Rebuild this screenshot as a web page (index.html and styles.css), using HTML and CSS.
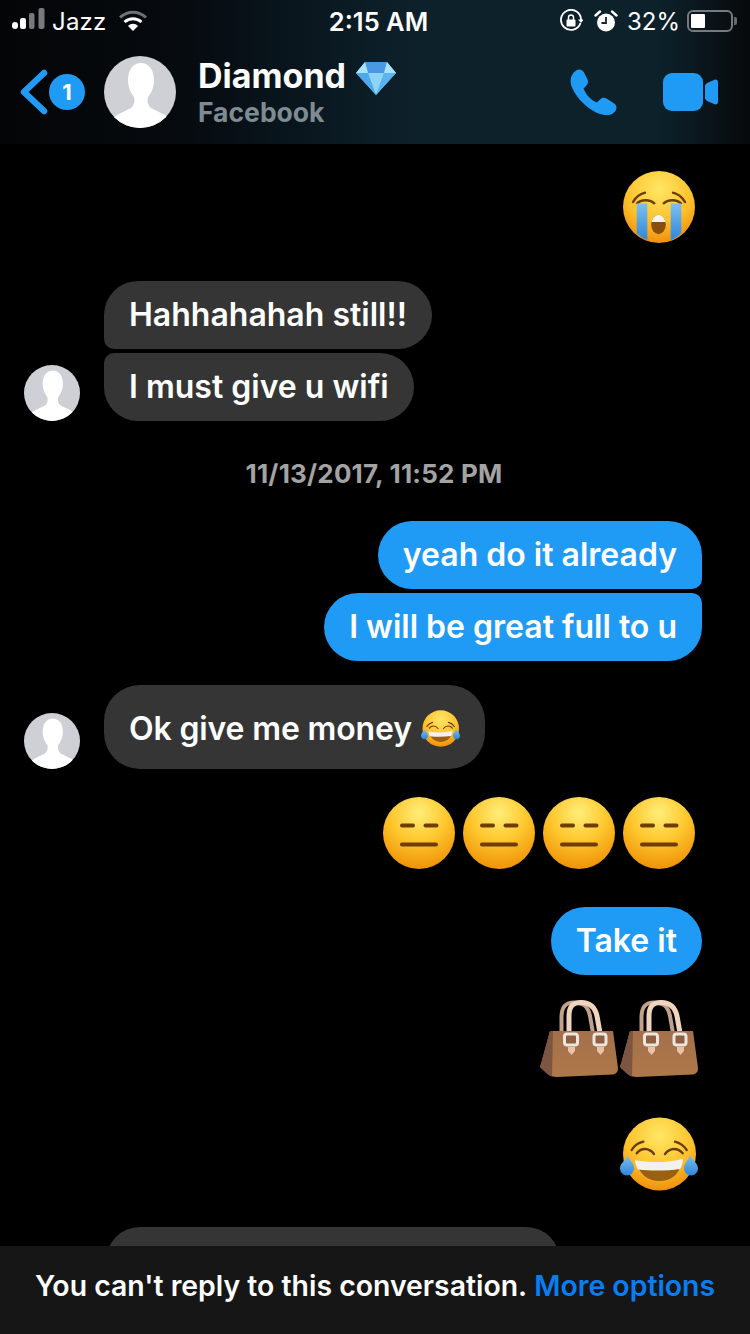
FILE: index.html
```html
<!DOCTYPE html>
<html lang="en">
<head>
<meta charset="utf-8">
<title>Diamond</title>
<link rel="stylesheet" href="styles.css">
</head>
<body>
<svg class="defs" aria-hidden="true">
  <defs>
    <radialGradient id="faceA" cx="50%" cy="25%" r="75%">
      <stop offset="0" stop-color="#ffe765"/><stop offset=".6" stop-color="#fdc22c"/><stop offset="1" stop-color="#ef900e"/>
    </radialGradient>
    <radialGradient id="faceB" cx="50%" cy="22%" r="78%">
      <stop offset="0" stop-color="#ffee7a"/><stop offset=".5" stop-color="#fec72d"/><stop offset="1" stop-color="#f09208"/>
    </radialGradient>
    <linearGradient id="tear" x1="0" y1="0" x2="0" y2="1">
      <stop offset="0" stop-color="#7cc0ee"/><stop offset="1" stop-color="#2f86dc"/>
    </linearGradient>
    <linearGradient id="leather" x1="0" y1="0" x2="0" y2="1">
      <stop offset="0" stop-color="#a4704a"/><stop offset="1" stop-color="#ae7849"/>
    </linearGradient>
    <clipPath id="avatarClip"><circle cx="36" cy="36" r="36"/></clipPath>
    <clipPath id="cryMouth"><ellipse cx="35.500" cy="53.500" rx="7.300" ry="9.700"/></clipPath>

    <symbol id="person" viewBox="0 0 72 72">
      <circle cx="36" cy="36" r="36" fill="#cfd0d5"/>
      <path clip-path="url(#avatarClip)" fill="#fff" d="M37 7C45 7 50 14 50 24C50 32 47 37 44 41C43 45 43.500 49 47 52L59 58C64 60 67 64 67 72L7 72C7 64 10 60 15 58L27 52C30.500 49 31 45 30 41C27 37 24 32 24 24C24 14 29 7 37 7Z"/>
    </symbol>

    <symbol id="e-cry" viewBox="0 0 72 72">
      <circle cx="36" cy="36" r="36" fill="url(#faceA)"/>
      <path d="M10 31C13 26 17 23 22 21.700" fill="none" stroke="#6b3c06" stroke-width="2.400" stroke-linecap="round"/>
      <path d="M62 31C59 26 55 23 50 21.700" fill="none" stroke="#6b3c06" stroke-width="2.400" stroke-linecap="round"/>
      <path d="M13.500 33C18 28 27 28 32 33" fill="none" stroke="#6b3c06" stroke-width="2.400"/>
      <path d="M40 33C45 28 54 28 58.500 33" fill="none" stroke="#6b3c06" stroke-width="2.400"/>
      <path d="M13.700 32.500H24.300V69C20 67.500 16.500 65 13.700 62Z" fill="url(#tear)"/>
      <path d="M47.700 32.500H58.300V62C55.500 65 52 67.500 47.700 69Z" fill="url(#tear)"/>
      <ellipse cx="35.500" cy="53.500" rx="7.300" ry="9.700" fill="#8a4e0a"/>
      <rect x="27" y="43" width="18" height="8" fill="#f5f3ee" clip-path="url(#cryMouth)"/>
    </symbol>

    <symbol id="e-flat" viewBox="0 0 72 72">
      <circle cx="36" cy="36" r="36" fill="url(#faceB)"/>
      <rect x="17" y="26.500" width="15" height="4" rx="2" fill="#6e3f05"/>
      <rect x="40.500" y="26.500" width="15" height="4" rx="2" fill="#6e3f05"/>
      <rect x="17" y="45.500" width="38" height="4" rx="2" fill="#6e3f05"/>
    </symbol>

    <symbol id="e-joy" viewBox="0 0 78 74">
      <circle cx="39.500" cy="37" r="36.500" fill="url(#faceA)"/>
      <path d="M11.700 33C14 29 18 26 23.300 24.700" fill="none" stroke="#6b3c06" stroke-width="2.400" stroke-linecap="round"/>
      <path d="M66.700 33C64 29 60 26 55 24.700" fill="none" stroke="#6b3c06" stroke-width="2.400" stroke-linecap="round"/>
      <path d="M16.700 36.300C21 30.500 29 30.500 34 37" fill="none" stroke="#6b3c06" stroke-width="2.400" stroke-linecap="round"/>
      <path d="M45 37C50 30.500 58 30.500 62.700 36.300" fill="none" stroke="#6b3c06" stroke-width="2.400" stroke-linecap="round"/>
      <path d="M17 46C31 49 47 49 61 46C60 57 51 64 39.500 64C28 64 19 57 17 46Z" fill="#9a5f10"/>
      <path d="M15 43C30 46 48 46 63 41.700C63 45 62 49 60 52C47 54 31 54 18 52.500C16 49 15 46 15 43Z" fill="#f3f1ee"/>
      <path d="M8 38.500C9 43 14 46 14 51C14 55 11 58.500 7 58.500C3 58.500 0 55 0 51.500C0 46 6 43 8 38.500Z" fill="url(#tear)"/>
      <path d="M70 38C69 43 64 46 64 51C64 55 67 58.500 71 58.500C75 58.500 78 55 78 51.500C78 46 72 43 70 38Z" fill="url(#tear)"/>
    </symbol>

    <symbol id="e-bag" viewBox="0 0 78 78">
      <path d="M21.500 33V16C22 6 26 2.500 34 2.500C43 2.500 48 6 50 16L53 33" fill="none" stroke="#c3a08a" stroke-width="4"/>
      <path d="M29 33V16C29 6 33 2.500 41 2.500C50 2.500 55 7 57 16L60 33" fill="none" stroke="#efd5c0" stroke-width="5"/>
      <path d="M10 31H73L78 68C78 72 76 74 73 74.500L17 77C13 77 10 76 7 73.500L1 68C0 67 0 66 1 64Z" fill="url(#leather)"/>
      <path d="M10 31H13L12 76.500C10 76 9 75 7 73.500L1 68C0 67 0 66 1 64Z" fill="#7c5640"/>
      <rect x="24.500" y="34" width="13" height="11" rx="2.500" fill="#8f6040" stroke="#ece6e0" stroke-width="3"/>
      <rect x="54" y="34" width="12" height="11" rx="2.500" fill="#8f6040" stroke="#ece6e0" stroke-width="3"/>
      <path d="M28 47H35V51L31.500 55L28 51Z" fill="#e9c2a8"/>
      <path d="M57 47H64V51L60.500 55L57 51Z" fill="#e9c2a8"/>
    </symbol>
  </defs>
</svg>

<div class="screen">
  <header class="top">
    <div class="status">
      <div class="status-left">
        <svg class="signal" viewBox="0 0 36 24" aria-hidden="true">
          <rect x="0" y="15" width="6" height="7" rx="3" fill="#fff"/>
          <rect x="8" y="11" width="6" height="11" rx="2" fill="#fff"/>
          <rect x="17" y="6" width="5.500" height="16" rx="2" fill="#77797c"/>
          <rect x="26.500" y="1" width="6" height="21" rx="2" fill="#77797c"/>
        </svg>
        <span class="carrier">Jazz</span>
        <svg class="wifi" viewBox="0 0 28 22" aria-hidden="true">
          <path d="M1 7.500C8.500 .5 19.500 .5 27 7.500" fill="none" stroke="#6f7275" stroke-width="3"/>
          <path d="M5.500 12C10.500 7.500 17.500 7.500 22.500 12" fill="none" stroke="#fff" stroke-width="3"/>
          <path d="M9 16C12 13 16 13 19 16L14 21Z" fill="#fff"/>
        </svg>
      </div>
      <div class="clock">2:15 AM</div>
      <div class="status-right">
        <svg class="ind" viewBox="0 0 24 24" aria-hidden="true">
          <path d="M21.500 14A10 10 0 1 1 22 11" fill="none" stroke="#fff" stroke-width="1.800"/>
          <path d="M19 10.500H24.500L22 14Z" fill="#fff"/>
          <rect x="7.500" y="10.500" width="9" height="7" rx="1" fill="#fff"/>
          <path d="M9.500 11V8.500A2.500 2.500 0 0 1 14.500 8.500V11" fill="none" stroke="#fff" stroke-width="1.500"/>
        </svg>
        <svg class="ind alarm" viewBox="0 0 24 24" aria-hidden="true">
          <circle cx="12" cy="13.500" r="9" fill="#fff"/>
          <path d="M12 8V14H7.500" fill="none" stroke="#14242c" stroke-width="1.800"/>
          <path d="M1.500 6.500L6 2.500M22.500 6.500L18 2.500" stroke="#fff" stroke-width="2.400" stroke-linecap="round"/>
        </svg>
        <span class="battery-text">32%</span>
        <div class="battery"><div class="battery-fill"></div></div>
        <div class="battery-nub"></div>
      </div>
    </div>
    <nav class="nav">
      <svg class="chevron" viewBox="0 0 28 46" aria-hidden="true">
        <path d="M24 4L4 23L24 42" fill="none" stroke="#1f9bf5" stroke-width="6.500" stroke-linecap="round" stroke-linejoin="round"/>
      </svg>
      <span class="badge">1</span>
      <svg class="nav-avatar" aria-hidden="true"><use href="#person"/></svg>
      <div class="who">
        <div class="name-line">
          <span class="name">Diamond</span>
          <svg class="gem" viewBox="0 0 40 34" aria-hidden="true">
            <path d="M9 1H31L40 12L20 34L0 12Z" fill="#6cc5f5"/>
            <path d="M9 1H31L28 12H12Z" fill="#4a97e4"/>
            <path d="M12 12H28L20 34Z" fill="#8fd4f7"/>
            <path d="M0 12L9 1L12 12Z" fill="#a9e2fb"/>
            <path d="M40 12L31 1L28 12Z" fill="#a9e2fb"/>
            <path d="M0 12H12L20 34Z" fill="#4ea9ec"/>
            <path d="M40 12H28L20 34Z" fill="#58b3ee"/>
          </svg>
        </div>
        <div class="source">Facebook</div>
      </div>
      <div class="actions">
        <svg class="phone" viewBox="0 0 48 48" aria-hidden="true">
          <path fill="#1f9bf5" d="M7 2.500C10 .5 13.500 1.500 15 4.500L18.500 11.500C19.500 14 19 16 17 18L14.500 20.500C17 27 22 32 28 34.500L31 31.500C33 29.500 35.500 29.500 37.500 30.500L44.500 35C48 37 48.500 41 45.500 44C42 47.500 37 48 31 46C19.500 42 8 31 3 19.500C0 12 2 6 7 2.500Z"/>
        </svg>
        <svg class="video" viewBox="0 0 55 38" aria-hidden="true">
          <rect x="0" y="0" width="40" height="38" rx="9" fill="#1f9bf5"/>
          <path d="M42 13C42 12 43 11 44 10L51 7C53 6 55 7 55 9V29C55 31 53 32 51 31L44 28C43 27 42 26 42 25Z" fill="#1f9bf5"/>
        </svg>
      </div>
    </nav>
  </header>

  <main class="thread">
    <div class="emoji-row first"><svg class="em"><use href="#e-cry"/></svg></div>

    <div class="group received gap-38">
      <svg class="avatar" aria-hidden="true"><use href="#person"/></svg>
      <div class="stack">
        <div class="bubble in top-one">Hahhahahah still!!</div>
        <div class="bubble in bottom-one">I must give u wifi</div>
      </div>
    </div>

    <div class="stamp">11/13/2017, 11:52 PM</div>

    <div class="stack out">
      <div class="bubble mine out-top">yeah do it already</div>
      <div class="bubble mine out-bottom">I will be great full to u</div>
    </div>

    <div class="group received gap-24">
      <svg class="avatar" aria-hidden="true"><use href="#person"/></svg>
      <div class="bubble in tall">Ok give me money <svg class="em-small" aria-hidden="true"><use href="#e-joy"/></svg></div>
    </div>

    <div class="emoji-row neutral">
      <svg class="em"><use href="#e-flat"/></svg>
      <svg class="em"><use href="#e-flat"/></svg>
      <svg class="em"><use href="#e-flat"/></svg>
      <svg class="em"><use href="#e-flat"/></svg>
    </div>

    <div class="stack out gap-38b">
      <div class="bubble mine">Take it</div>
    </div>

    <div class="emoji-row bags">
      <svg class="bag"><use href="#e-bag"/></svg>
      <svg class="bag"><use href="#e-bag"/></svg>
    </div>

    <div class="emoji-row laugh"><svg class="em-joy"><use href="#e-joy"/></svg></div>

    <div class="bubble in partial"></div>
  </main>

  <footer class="notice">You can't reply to this conversation.&nbsp;<span class="link">More options</span></footer>
</div>
</body>
</html>
```
FILE: styles.css
```css
* { box-sizing: border-box; }
html, body { margin: 0; padding: 0; background: #000; }
body { font-family: Inter, "Liberation Sans", sans-serif; color: #fff; }
.defs { position: absolute; width: 0; height: 0; }
.screen { position: relative; width: 750px; height: 1334px; overflow: hidden; background: #000; }

.top { height: 144px; background: linear-gradient(90deg, #040506 0%, #060b10 25%, #09161e 40%, #0d212b 55%, #0d212b 88%, #07090b 100%); }
.status { height: 42px; display: flex; align-items: center; justify-content: space-between; }
.status-left { display: flex; align-items: center; padding-left: 12px; width: 300px; }
.signal { width: 36px; height: 24px; margin-top: -4px; }
.carrier { font-size: 24px; font-weight: 400; margin-left: 4px; letter-spacing: .2px; }
.wifi { width: 28px; height: 22px; margin-left: 13px; }
.clock { font-size: 25.500px; font-weight: 600; width: 150px; text-align: center; margin-left: 3px; }
.status-right { display: flex; align-items: center; width: 296px; justify-content: flex-end; padding-right: 13px; }
.ind { width: 24px; height: 24px; margin-right: 11px; }
.alarm { margin-right: 9px; }
.battery-text { font-size: 24px; font-weight: 400; margin-right: 7px; }
.battery { width: 46px; height: 22px; border: 2px solid #77797c; border-radius: 6px; padding: 2px; }
.battery-fill { width: 14px; height: 14px; background: #fff; border-radius: 1px; }
.battery-nub { width: 3px; height: 8px; background: #66696c; border-radius: 0 2px 2px 0; margin-left: 1px; }

.nav { height: 102px; display: flex; align-items: center; padding: 0 32px 2px 20px; }
.chevron { width: 28px; height: 46px; flex: none; }
.badge { width: 36px; height: 36px; border-radius: 50%; background: #1f9bf5; display: flex; align-items: center; justify-content: center; font-size: 22px; font-weight: 700; margin-left: 1px; flex: none; }
.nav-avatar { width: 72px; height: 72px; margin-left: 19px; flex: none; }
.who { margin: 0 0 0 22px; display: flex; flex-direction: column; }
.name-line { display: flex; align-items: center; height: 40px; margin-top: 1px; }
.name { font-size: 34px; font-weight: 700; line-height: 40px; }
.gem { width: 40px; height: 34px; margin: 3px 0 0 10px; }
.source { font-size: 26.500px; font-weight: 700; color: #7f8b93; line-height: 34px; margin-top: -1px; }
.actions { margin-left: auto; display: flex; align-items: center; gap: 46px; }
.phone { width: 48px; height: 48px; }
.video { width: 55px; height: 38px; }

.thread { display: flex; flex-direction: column; padding: 27px 48px 0 24px; }
.emoji-row { display: flex; justify-content: flex-end; gap: 8px; padding-right: 7px; }
.em { width: 72px; height: 72px; }
.bag { width: 78px; height: 78px; }
.em-joy { width: 78px; height: 74px; }
.em-small { width: 39px; height: 37px; margin-left: 1px; }
.neutral { margin-top: 28px; }
.bags { margin-top: 25px; gap: 2px; padding-right: 4px; }
.laugh { margin-top: 39px; padding-right: 4px; }

.group { display: flex; align-items: flex-end; gap: 24px; }
.gap-38 { margin-top: 38px; }
.gap-24 { margin-top: 24px; }
.avatar { width: 56px; height: 56px; flex: none; }
.stack { display: flex; flex-direction: column; align-items: flex-start; gap: 4px; }
.stack.out { align-items: flex-end; }
.bubble { height: 68px; display: flex; align-items: center; padding: 0 25px 1px; border-radius: 34px; font-size: 32px; font-weight: 600; white-space: pre; }
.in { background: #353535; }
.mine { background: #1f9bf5; }
.top-one { border-bottom-left-radius: 10px; }
.bottom-one { border-top-left-radius: 10px; }
.out-top { border-bottom-right-radius: 10px; }
.out-bottom { border-top-right-radius: 10px; }
.tall { height: 84px; border-radius: 36px; padding: 3px 25px 0; letter-spacing: -.15px; }
.stamp { margin: 38px 0 32px 22px; height: 30px; line-height: 30px; text-align: center; font-size: 26px; font-weight: 700; letter-spacing: .2px; color: #a3a3a3; }
.gap-38b { margin-top: 38px; }
.partial { width: 454px; margin-top: 36px; margin-left: 82px; height: 68px; }

.notice { position: absolute; left: 0; right: 0; bottom: 0; height: 88px; padding-bottom: 10px; background: #161616; display: flex; align-items: center; justify-content: center; font-size: 28.400px; font-weight: 600; }
.link { color: #0b7df2; }
```
